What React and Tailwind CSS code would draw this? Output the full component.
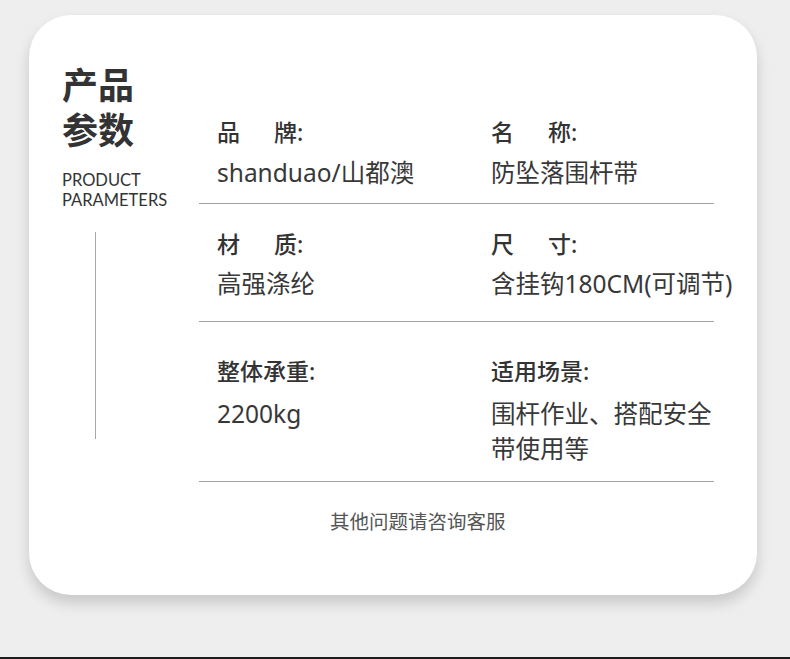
const cjk = { fontFamily: '"Noto Sans", "Noto Sans CJK SC", sans-serif' };

const rows = [
  {
    pad: "pt-[52px] pb-[13px]",
    gap: "mt-[5px]",
    left: { a: "品", b: "牌:", value: "shanduao/山都澳" },
    right: { a: "名", b: "称:", value: "防坠落围杆带" },
  },
  {
    pad: "pt-[23px] pb-[20px]",
    gap: "mt-[4px]",
    left: { a: "材", b: "质:", value: "高强涤纶" },
    right: { a: "尺", b: "寸:", value: "含挂钩180CM(可调节)", nowrap: true },
  },
  {
    pad: "pt-[32px] pb-[15px]",
    gap: "mt-[7px]",
    left: { label: "整体承重:", value: "2200kg" },
    right: { label: "适用场景:", value: "围杆作业、搭配安全带使用等" },
  },
];

const Cell = ({ item, gap, className }) => (
  <div className={className}>
    <div className="text-[23px] leading-[35px] font-medium text-[#333]">
      {item.label ? (
        item.label
      ) : (
        <>
          <span className="mr-[34px]">{item.a}</span>
          {item.b}
        </>
      )}
    </div>
    <div
      className={`${gap} text-[24.5px] leading-[35px] text-[#383838] ${
        item.nowrap ? "whitespace-nowrap" : ""
      }`}
    >
      {item.value}
    </div>
  </div>
);

export default function App() {
  return (
    <div className="w-[790px] h-[659px] bg-[#eeeeee] flex flex-col overflow-hidden" style={cjk}>
      {/* CARD */}
      <div className="mt-[15px] ml-[29px] w-[728px] h-[580px] bg-white rounded-[42px] shadow-[0_8px_14px_rgba(0,0,0,0.16)] pt-[48px] pl-[33px] flex flex-col">
        <div className="flex items-start">
          {/* LEFT TITLE */}
          <div className="w-[137px] flex flex-col">
            <div className="text-[36px] leading-[45px] font-bold text-[#333]">
              产品
              <br />
              参数
            </div>
            <div
              className="mt-[17px] text-[16.5px] leading-[20px] text-[#333]"
              style={{ fontFamily: 'Lato, "Noto Sans", sans-serif' }}
            >
              PRODUCT
              <br />
              PARAMETERS
            </div>
            <div className="mt-[22px] ml-[33px] w-px h-[207px] bg-[#a8a8a8]" />
          </div>

          {/* PARAMETERS */}
          <div className="w-[515px] flex flex-col">
            {rows.map((r, i) => (
              <div key={i} className={`${r.pad} border-b border-[#a0a0a0] flex`}>
                <Cell item={r.left} gap={r.gap} className="pl-[18px] w-[292px]" />
                <Cell item={r.right} gap={r.gap} className="w-[223px]" />
              </div>
            ))}

            {/* FOOTER */}
            <div className="mt-[26px] pl-[131px] text-[19.5px] leading-[28px] text-[#555]">
              其他问题请咨询客服
            </div>
          </div>
        </div>
      </div>

      <div className="flex-1" />
      <div className="h-[2px] bg-[#1b1b1b]" />
    </div>
  );
}
